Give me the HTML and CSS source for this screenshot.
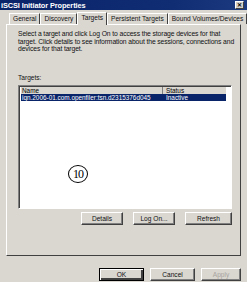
FILE: index.html
```html
<!DOCTYPE html>
<html>
<head>
<meta charset="utf-8">
<link rel="stylesheet" href="styles.css">
</head>
<body>
<div class="dialog">
  <div class="titlebar">
    <span class="title">iSCSI Initiator Properties</span>
    <span class="close">✕</span>
  </div>
  <div class="tabs">
    <div class="tab">General</div>
    <div class="tab">Discovery</div>
    <div class="tab active">Targets</div>
    <div class="tab">Persistent Targets</div>
    <div class="tab">Bound Volumes/Devices</div>
  </div>
  <div class="panel">
    <p class="desc">Select a target and click Log On to access the storage devices for that<br>target. Click details to see information about the sessions, connections and<br>devices for that target.</p>
    <div class="label">Targets:</div>
    <div class="list">
      <div class="row head">
        <div class="c1">Name</div>
        <div class="c2">Status</div>
      </div>
      <div class="row sel">
        <div class="c1">iqn.2006-01.com.openfiler:tsn.d2315376d045</div>
        <div class="c2">Inactive</div>
      </div>
      <div class="marker">10</div>
    </div>
    <div class="actions">
      <div class="btn w42">Details</div>
      <div class="btn w42">Log On...</div>
      <div class="btn w47">Refresh</div>
    </div>
  </div>
  <div class="footer">
    <div class="btn ok">OK</div>
    <div class="btn">Cancel</div>
    <div class="btn disabled">Apply</div>
  </div>
</div>
</body>
</html>
```

FILE: styles.css
```css
html, body {
  margin: 0;
  padding: 0;
}
body {
  width: 247px;
  height: 282px;
  background: #dad7d1;
  font-family: "Liberation Sans", Arial, sans-serif;
  font-size: 6px;
  color: #000;
  overflow: hidden;
}
.dialog {
  display: flex;
  flex-direction: column;
  height: 282px;
}
.titlebar {
  height: 10px;
  background: linear-gradient(90deg, #0a246a 0%, #102c72 70%, #1c3a80 100%);
  display: flex;
  align-items: center;
  justify-content: space-between;
  padding: 0 3px 0 1px;
}
.title {
  color: #fff;
  font-weight: bold;
  font-size: 7.4px;
  letter-spacing: -0.1px;
}
.close {
  width: 9px;
  height: 8px;
  background: #d4d0c8;
  border: 1px solid;
  border-color: #fff #404040 #404040 #fff;
  box-sizing: border-box;
  font-size: 6px;
  line-height: 6px;
  text-align: center;
  font-weight: bold;
  color: #000;
}
.tabs {
  display: flex;
  margin: 3px 0 0 9px;
  height: 11px;
  align-items: flex-end;
  position: relative;
  z-index: 1;
}
.tab {
  height: 10px;
  line-height: 10px;
  padding: 0 3px;
  border: 1px solid;
  border-bottom: none;
  border-color: #fff #404040 transparent #fff;
  font-size: 6.6px;
  color: #111;
  background: #dad7d1;
  white-space: nowrap;
}
.tab.active {
  height: 12px;
  line-height: 10px;
  margin-bottom: -1px;
  padding: 0 3px;
}
.panel {
  margin: 0 6px 0 6px;
  height: 225px;
  border: 1px solid;
  border-color: #fff #404040 #404040 #fff;
  padding: 5px 8px 0 11px;
  display: flex;
  flex-direction: column;
}
.desc {
  margin: 0;
  font-size: 6.8px;
  line-height: 7.6px;
  letter-spacing: -0.12px;
  white-space: nowrap;
  color: #111;
}
.label {
  margin-top: 21px;
  font-size: 6.6px;
  color: #111;
}
.list {
  margin-top: 4px;
  height: 124px;
  background: #fff;
  border: 1px solid;
  border-color: #808080 #fff #fff #808080;
  box-shadow: inset 1px 1px 0 #404040;
  position: relative;
  padding: 1px 0 0 2px;
  box-sizing: border-box;
}
.row {
  display: flex;
  height: 7px;
  line-height: 7px;
  font-size: 6.4px;
}
.row .c1 {
  width: 141px;
  padding-left: 1px;
  white-space: nowrap;
  overflow: hidden;
}
.row .c2 {
  flex: 1;
  padding-left: 3px;
}
.head {
  background: #dad7d1;
  margin-right: 5px;
}
.head .c1 {
  border-right: 1px solid #808080;
  box-sizing: border-box;
  width: 142px;
}
.sel {
  background: #0a246a;
  color: #fff;
  margin-right: 5px;
}
.marker {
  position: absolute;
  left: 49px;
  top: 79px;
  width: 18px;
  height: 16px;
  border: 1.5px solid #000;
  border-radius: 50%;
  font-family: "Liberation Serif", serif;
  font-size: 12px;
  line-height: 16px;
  text-align: center;
  letter-spacing: -1px;
  box-sizing: content-box;
}
.actions {
  display: flex;
  justify-content: flex-end;
  gap: 10px;
  margin-top: 3px;
}
.btn {
  height: 13px;
  box-sizing: border-box;
  border: 1px solid;
  border-color: #fff #404040 #404040 #fff;
  box-shadow: inset -1px -1px 0 #808080;
  font-size: 6.6px;
  line-height: 11px;
  text-align: center;
  color: #111;
  width: 45px;
}
.w42 { width: 42px; }
.w47 { width: 47px; }
.footer {
  display: flex;
  justify-content: flex-end;
  gap: 6px;
  padding: 0 6px 0 0;
  margin-top: 12px;
}
.btn.ok {
  border-color: #000;
  box-shadow: inset 1px 1px 0 #fff, inset -2px -2px 0 #404040;
  width: 45px;
}
.btn.disabled {
  color: #a8a5a0;
  width: 40px;
}
```
